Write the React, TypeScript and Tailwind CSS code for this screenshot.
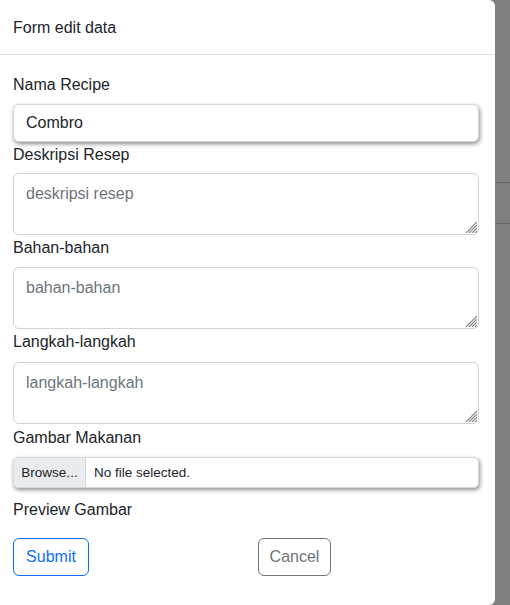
import React from "react";

function ResizeGrip() {
  return (
    <svg
      className="pointer-events-none absolute bottom-[2px] right-[2px]"
      width="12"
      height="12"
      viewBox="0 0 12 12"
    >
      {[2, 5, 8, 11].map((o) => (
        <line key={o} x1={12} y1={12 - o} x2={12 - o} y2={12} stroke="#8a8a8a" strokeWidth="1.2" />
      ))}
    </svg>
  );
}

function TextBox({ placeholder }: { placeholder: string }) {
  return (
    <div className="relative">
      <textarea
        placeholder={placeholder}
        className="block h-[62px] w-full resize-none rounded-[6px] border border-[#ced4da] bg-white px-[12px] py-[8px] text-[16px] leading-[24px] text-[#212529] outline-none placeholder:text-[#6c757d]"
      />
      <ResizeGrip />
    </div>
  );
}

export default function App() {
  return (
    <div
      className="flex h-[605px] w-[510px] overflow-hidden bg-[#808080] text-[#212529]"
      style={{ fontFamily: '"Liberation Sans", Arial, sans-serif' }}
    >
      <div className="flex h-[605px] w-[495px] shrink-0 flex-col rounded-r-[6px] bg-white">
        {/* Header */}
        <div className="flex h-[55px] items-center border-b border-[#dee2e6] px-[13px] pt-[1px] text-[16px]">
          Form edit data
        </div>

        {/* Body */}
        <div className="flex flex-col pl-[13px] pr-[16px] pt-[18px] text-[16px] leading-[24px]">
          <label>Nama Recipe</label>
          <div className="mt-[7px] flex h-[38px] items-center rounded-[6px] border border-[#d6d9dc] bg-white px-[12px] shadow-[1px_2px_4px_rgba(0,0,0,0.45)]">
            Combro
          </div>

          <label className="mt-[1px]">Deskripsi Resep</label>
          <div className="mt-[6px]">
            <TextBox placeholder="deskripsi resep" />
          </div>

          <label className="mt-[1px]">Bahan-bahan</label>
          <div className="mt-[7px]">
            <TextBox placeholder="bahan-bahan" />
          </div>

          <label className="mt-[1px]">Langkah-langkah</label>
          <div className="mt-[8px]">
            <TextBox placeholder="langkah-langkah" />
          </div>

          <label className="mt-[2px]">Gambar Makanan</label>
          <div className="mt-[7px] flex h-[31px] overflow-hidden rounded-[5px] border border-[#d6d9dc] bg-white text-[13.5px] shadow-[1px_2px_4px_rgba(0,0,0,0.45)]">
            <div className="flex w-[72px] items-center justify-center border-r border-[#d6d9dc] bg-[#e9ecef]">
              Browse...
            </div>
            <div className="flex items-center pl-[8px]">No file selected.</div>
          </div>

          <label className="mt-[10px]">Preview Gambar</label>

          <div className="mt-[16px] flex gap-[169px]">
            <button className="h-[38px] w-[76px] rounded-[6px] border border-[#0d6efd] text-[16px] text-[#0d6efd]">
              Submit
            </button>
            <button className="h-[38px] w-[73px] rounded-[6px] border border-[#6c757d] text-[16px] text-[#6c757d]">
              Cancel
            </button>
          </div>
        </div>
      </div>

      {/* Backdrop strip with the page behind */}
      <div className="flex flex-1 flex-col">
        <div className="h-[182px]" />
        <div className="h-[1px] bg-[#666]" />
        <div className="h-[40px]" />
        <div className="h-[1px] bg-[#666]" />
      </div>
    </div>
  );
}
